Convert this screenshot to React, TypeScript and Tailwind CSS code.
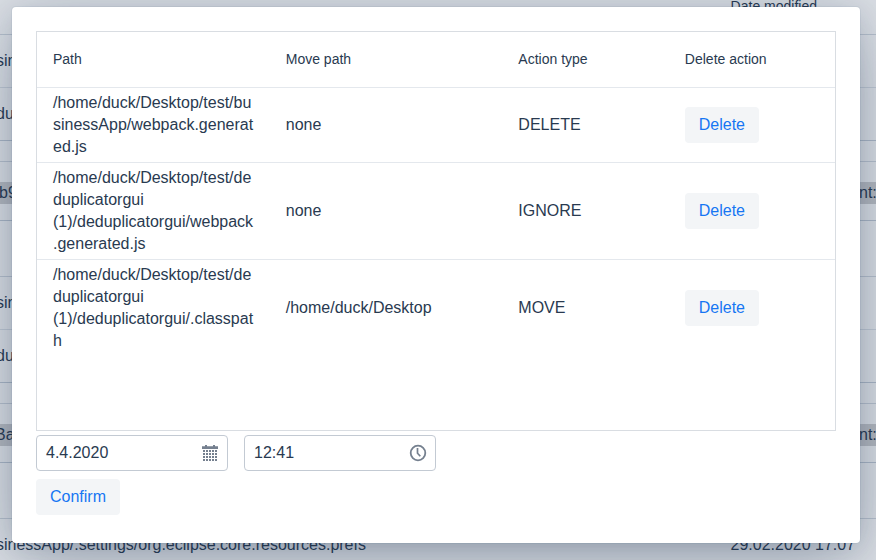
import React from "react";

const actions = [
  { lines: ["/home/duck/Desktop/test/bu", "sinessApp/webpack.generat", "ed.js"], move: "none", type: "DELETE", height: "h-[75px]" },
  { lines: ["/home/duck/Desktop/test/de", "duplicatorgui", "(1)/deduplicatorgui/webpack", ".generated.js"], move: "none", type: "IGNORE", height: "h-[97px]" },
  { lines: ["/home/duck/Desktop/test/de", "duplicatorgui", "(1)/deduplicatorgui/.classpat", "h"], move: "/home/duck/Desktop", type: "MOVE", height: "h-[95px]" },
];

const columns = "grid grid-cols-[232.75px_232.6px_166.5px_166.15px]";

function PageGroup({ hash, indent }: { hash: string; indent: string }) {
  return (
    <>
      <div className="-ml-1 h-[53px] border-b border-[#e0e5eb] leading-[52px] whitespace-nowrap">sinessApp</div>
      <div className="-ml-1 h-[53px] border-b border-[#c7cfda] leading-[52px] whitespace-nowrap">duplicatorgui</div>
      <div className="h-[21px] border-b border-[#d5dbe3]" />
      <div className="flex h-[59px] items-center border-b border-[#c7cfda] pt-1">
        <div className="flex h-[22px] w-full justify-between bg-[#d2d2d3] leading-[22px]">
          <span className={indent}>{hash}</span>
          <span className="w-[17px] whitespace-nowrap">nt:</span>
        </div>
      </div>
      <div className="h-14 border-b border-[#d5dbe3]" />
    </>
  );
}

function CalendarIcon() {
  return (
    <svg width="16" height="16" viewBox="0 0 16 16" fill="#75808f">
      <path d="M0 1.2h3V0h2v1.2h6V0h2v1.2h3V4H0z" />
      {[5.1, 8.1, 11.1, 14.1].map((y) =>
        [1, 4, 7, 10, 13].map((x) => <path key={`${x}-${y}`} d={`M${x} ${y}h2v1.9h-2z`} />)
      )}
    </svg>
  );
}

function ClockIcon() {
  return (
    <svg width="18" height="18" viewBox="0 0 18 18" fill="none" stroke="#75808f" strokeWidth="1.8">
      <circle cx="9" cy="9" r="7.3" />
      <path d="M8.5 4v5.2l2.8 3.1" strokeWidth="1.7" />
    </svg>
  );
}

export default function App() {
  return (
    <div className="relative h-[560px] w-[876px] overflow-hidden bg-white font-['Liberation_Sans',Arial,sans-serif] text-base text-[#293a50]">
      <div className="-mt-[22px]">
        <div className="flex h-[57px] items-center justify-end border-b border-[#d5dbe3] pr-[59px] text-sm">Date modified</div>
        <PageGroup hash="b9" indent="-ml-px" />
        <PageGroup hash="Ba" indent="-ml-[5px]" />
        <div className="-ml-1 flex h-[51px] items-center justify-between whitespace-nowrap">
          <span>sinessApp/.settings/org.eclipse.core.resources.prefs</span>
          <span className="w-[145.5px]">29.02.2020 17:07</span>
        </div>
      </div>

      <div className="absolute inset-0 bg-[hsla(214,53%,23%,0.17)] px-3 pt-[7px]">
        <div className="h-[536px] w-[848px] rounded bg-white px-6 pt-6 shadow-[0_0_0_1px_hsla(214,61%,25%,0.05),0_4px_24px_-3px_hsla(214,53%,23%,0.16),0_18px_64px_-8px_hsla(214,47%,21%,0.38)]">
          <div className="h-[400px] w-[800px] border border-[#d9dde2]">
            <div className={`${columns} h-14 items-center border-b border-[#e4e8ed] pb-0.5 text-sm`}>
              <span className="pl-4">Path</span>
              <span className="pl-4">Move path</span>
              <span className="pl-4">Action type</span>
              <span className="pl-4">Delete action</span>
            </div>
            {actions.map((a, i) => (
              <div key={i} className={`${columns} ${a.height} items-center leading-[22px] ${i < 2 ? "border-b border-[#e4e8ed]" : ""}`}>
                <div className="pl-4 whitespace-nowrap">
                  {a.lines.map((l) => <div key={l}>{l}</div>)}
                </div>
                <span className="pl-4">{a.move}</span>
                <span className="pl-4">{a.type}</span>
                <div className="pl-4">
                  <button className="block h-9 w-[74px] rounded bg-[#f3f5f7] text-[#1676f3]">Delete</button>
                </div>
              </div>
            ))}
          </div>
          <div className="mt-1 flex gap-4">
            <div className="flex h-9 w-48 items-center justify-between rounded border border-[#c3cad3] pr-[9px] pl-[9px]">
              <span>4.4.2020</span>
              <CalendarIcon />
            </div>
            <div className="flex h-9 w-48 items-center justify-between rounded border border-[#c3cad3] pr-2 pl-[9px]">
              <span>12:41</span>
              <ClockIcon />
            </div>
          </div>
          <button className="mt-2 block h-9 w-[84px] rounded bg-[#f3f5f7] text-[#1676f3]">Confirm</button>
        </div>
      </div>
    </div>
  );
}
